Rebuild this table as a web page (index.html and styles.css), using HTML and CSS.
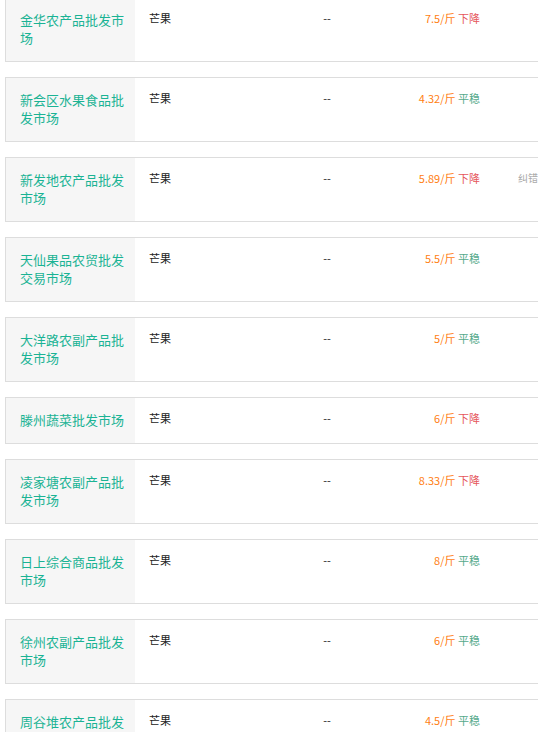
FILE: index.html
```html
<!DOCTYPE html>
<html lang="zh-CN">
<head>
  <meta charset="UTF-8">
  <title>芒果批发价格</title>
  <link rel="stylesheet" href="styles.css">
</head>
<body>
  <ul class="price-list">
    <li class="item">
      <div class="market">金华农产品批发市场</div>
      <div class="variety">芒果</div>
      <div class="spec">--</div>
      <div class="price">7.5/斤 <span class="down">下降</span></div>
      <div class="action"></div>
    </li>
    <li class="item">
      <div class="market">新会区水果食品批发市场</div>
      <div class="variety">芒果</div>
      <div class="spec">--</div>
      <div class="price">4.32/斤 <span class="flat">平稳</span></div>
      <div class="action"></div>
    </li>
    <li class="item">
      <div class="market">新发地农产品批发市场</div>
      <div class="variety">芒果</div>
      <div class="spec">--</div>
      <div class="price">5.89/斤 <span class="down">下降</span></div>
      <div class="action"><a href="#">纠错</a></div>
    </li>
    <li class="item">
      <div class="market">天仙果品农贸批发交易市场</div>
      <div class="variety">芒果</div>
      <div class="spec">--</div>
      <div class="price">5.5/斤 <span class="flat">平稳</span></div>
      <div class="action"></div>
    </li>
    <li class="item">
      <div class="market">大洋路农副产品批发市场</div>
      <div class="variety">芒果</div>
      <div class="spec">--</div>
      <div class="price">5/斤 <span class="flat">平稳</span></div>
      <div class="action"></div>
    </li>
    <li class="item">
      <div class="market">滕州蔬菜批发市场</div>
      <div class="variety">芒果</div>
      <div class="spec">--</div>
      <div class="price">6/斤 <span class="down">下降</span></div>
      <div class="action"></div>
    </li>
    <li class="item">
      <div class="market">凌家塘农副产品批发市场</div>
      <div class="variety">芒果</div>
      <div class="spec">--</div>
      <div class="price">8.33/斤 <span class="down">下降</span></div>
      <div class="action"></div>
    </li>
    <li class="item">
      <div class="market">日上综合商品批发市场</div>
      <div class="variety">芒果</div>
      <div class="spec">--</div>
      <div class="price">8/斤 <span class="flat">平稳</span></div>
      <div class="action"></div>
    </li>
    <li class="item">
      <div class="market">徐州农副产品批发市场</div>
      <div class="variety">芒果</div>
      <div class="spec">--</div>
      <div class="price">6/斤 <span class="flat">平稳</span></div>
      <div class="action"></div>
    </li>
    <li class="item">
      <div class="market">周谷堆农产品批发市场</div>
      <div class="variety">芒果</div>
      <div class="spec">--</div>
      <div class="price">4.5/斤 <span class="flat">平稳</span></div>
      <div class="action"></div>
    </li>
  </ul>
</body>
</html>
```

FILE: styles.css
```css
body {
  margin: 0;
  padding: 0 0 0 5px;
  overflow: hidden;
  font-family: "Noto Sans CJK SC", "Microsoft YaHei", sans-serif;
  color: #333;
  background: #fff;
}

.price-list {
  list-style: none;
  margin: -3px 0 0;
  padding: 0;
}

.item {
  display: flex;
  width: 600px;
  border: 1px solid #ddd;
  margin-bottom: 15px;
}

.market {
  width: 110px;
  flex-shrink: 0;
  padding: 13px 5px 14px 14px;
  background: #f6f6f6;
  color: #1ab394;
  font-size: 13px;
  line-height: 18px;
}

.variety,
.spec,
.price,
.action {
  padding-top: 12px;
  font-size: 11px;
  line-height: 16px;
}

.variety {
  width: 136px;
  padding-left: 14px;
  color: #222;
}

.spec {
  width: 84px;
  text-align: center;
  color: #222;
}

.price {
  width: 111px;
  text-align: right;
  color: #ff7e12;
}

.down {
  color: #e5575b;
}

.flat {
  color: #54a98b;
}

.action {
  padding-left: 38px;
  font-size: 10px;
}

.action a {
  color: #aaa;
  text-decoration: none;
}
```
